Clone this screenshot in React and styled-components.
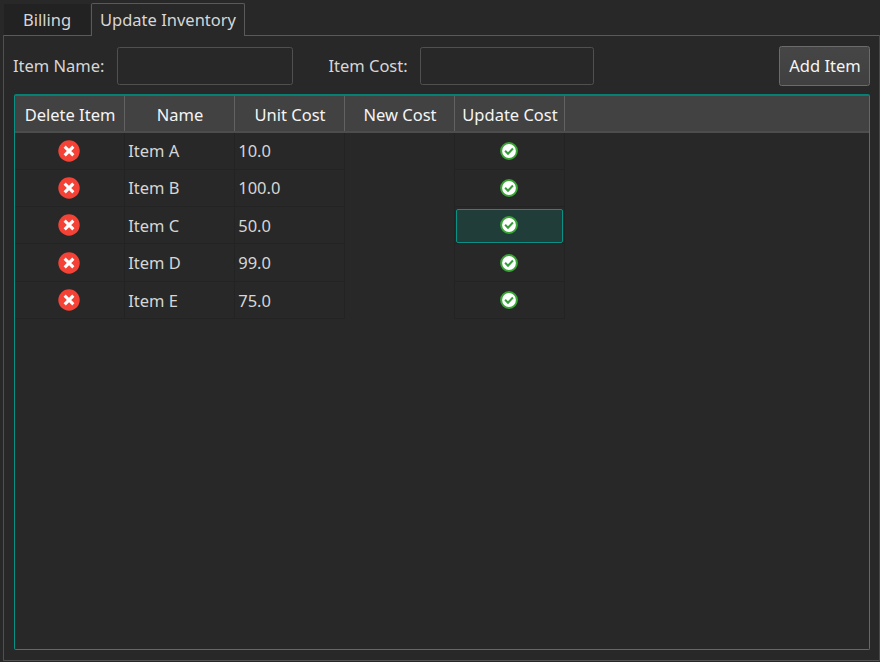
import React from "react";
import styled, { createGlobalStyle } from "styled-components";

const GlobalStyle = createGlobalStyle`
  * { box-sizing: border-box; }
  body {
    margin: 0;
    background: #282828;
    color: #d6d6d6;
    font: 16.5px/22px "Noto Sans", sans-serif;
    overflow: hidden;
  }
`;

const Window = styled.main`
  width: 880px;
  height: 662px;
  padding: 3px 0 1px 3px;
  display: flex;
  flex-direction: column;
`;

const TabBar = styled.div`
  display: flex;
  height: 33px;
  margin-bottom: -1px;
  z-index: 1;
`;

const Tab = styled.button`
  width: ${(p) => p.$width}px;
  height: 33px;
  padding: 0;
  font: inherit;
  color: inherit;
  border: 1px solid ${(p) => (p.$active ? "#5a5a5a" : "transparent")};
  border-bottom: 0;
  border-radius: 2px 2px 0 0;
  background: ${(p) => (p.$active ? "#282828" : "#222222")};
  background-clip: padding-box;
  box-shadow: ${(p) => (p.$active ? "none" : "inset 0 -1px #5a5a5a")};
`;

const Panel = styled.section`
  flex: 1;
  min-height: 0;
  width: 877px;
  border: 1px solid #505050;
  border-top-color: #5a5a5a;
  border-right-color: #484848;
  border-radius: 1px;
  padding: 10px 9px 10px 10px;
  display: flex;
  flex-direction: column;
`;

const Form = styled.form`
  display: flex;
  align-items: center;
  height: 40px;
  margin-left: -1px;
  margin-bottom: 8px;
`;

const Label = styled.label`
  width: ${(p) => p.$width}px;
`;

const Field = styled.input`
  width: ${(p) => p.$width}px;
  height: 38px;
  margin-right: ${(p) => p.$gap || 0}px;
  border: 1px solid #505050;
  border-radius: 2.5px;
  background: #282828;
  color: inherit;
  font: inherit;
  outline: 0;
`;

const AddButton = styled.button`
  width: 91px;
  height: 40px;
  margin-left: auto;
  padding: 0 0 0 1px;
  border: 1px solid #6b6b6b;
  border-radius: 2.5px;
  background: linear-gradient(#464646, #404040);
  color: #f5f5f5;
  font: inherit;
`;

const TableFrame = styled.div`
  flex: 1;
  border: 1px solid #089184;
  border-top: 2px solid #048074;
  border-radius: 2px;
`;

const Columns = styled.div`
  display: grid;
  grid-template-columns: repeat(5, 110px) 1fr;
`;

const Header = styled(Columns)`
  height: 37px;
  background: #424242;
  border-bottom: 2px solid #4d4d4d;
`;

const HeaderCell = styled.div`
  display: flex;
  align-items: center;
  justify-content: center;
  padding: 3px 0 0 1px;
  border-right: 1px solid #626262;
  color: #f5f5f5;
  white-space: nowrap;
`;

const Row = styled(Columns)`
  height: ${(p) => p.$height}px;
`;

const Cell = styled.div`
  display: flex;
  align-items: center;
  justify-content: ${(p) => (p.$center ? "center" : "flex-start")};
  padding: ${(p) => (p.$center ? "0 1px 0 0" : "0 0 0 3.2px")};
  border-right: 1px solid #232323;
  border-bottom: 1px solid ${(p) => (p.$blank ? "transparent" : "#232323")};
  position: relative;
`;

const CellText = styled.span`
  padding-top: ${(p) => (p.$raised ? 0 : 1)}px;
  margin-top: ${(p) => (p.$raised ? -1 : 0)}px;
`;

const Selection = styled.div`
  position: absolute;
  inset: 2px 1px 0 1px;
  border: 1px solid #089184;
  border-radius: 2px;
  background: #213d3a;
`;

const Icon = styled.svg`
  position: relative;
  display: block;
  margin-top: ${(p) => (p.$raised ? -1 : 0)}px;
`;

const DeleteIcon = ({ raised }) => (
  <Icon $raised={raised} width="22" height="22" viewBox="0 0 22 22">
    <circle cx="11" cy="11" r="10.7" fill="#f44336" />
    <path d="M7.8 7.8 14.2 14.2M14.2 7.8 7.8 14.2" stroke="#fff" strokeWidth="3.1" strokeLinecap="square" />
  </Icon>
);

const ApplyIcon = () => (
  <Icon width="18" height="18" viewBox="0 0 18 18">
    <circle cx="9" cy="9" r="7.9" fill="#fff" stroke="#38a534" strokeWidth="2" />
    <path d="m5.1 8.7 2.9 3 4.9-5.2" fill="none" stroke="#349c38" strokeWidth="2" />
  </Icon>
);

const headings = ["Delete Item", "Name", "Unit Cost", "New Cost", "Update Cost"];
const items = [
  { name: "Item A", cost: "10.0", height: 37, raised: true },
  { name: "Item B", cost: "100.0", height: 37, raised: true },
  { name: "Item C", cost: "50.0", height: 37, selected: true },
  { name: "Item D", cost: "99.0", height: 38 },
  { name: "Item E", cost: "75.0", height: 37 },
];

export default function App() {
  return (
    <Window>
      <GlobalStyle />
      <TabBar>
        <Tab $width={88}>Billing</Tab>
        <Tab $width={154} $active>Update Inventory</Tab>
      </TabBar>
      <Panel>
        <Form>
          <Label $width={104.4} htmlFor="name">Item Name:</Label>
          <Field id="name" $width={175.6} $gap={35.4} />
          <Label $width={91.6} htmlFor="cost">Item Cost:</Label>
          <Field id="cost" $width={174} />
          <AddButton type="button">Add Item</AddButton>
        </Form>
        <TableFrame>
          <Header>
            {headings.map((h) => <HeaderCell key={h}>{h}</HeaderCell>)}
          </Header>
          {items.map((item, index) => (
            <Row key={item.name} $height={item.height}>
              <Cell $center><DeleteIcon raised={index === 0} /></Cell>
              <Cell><CellText $raised={item.raised}>{item.name}</CellText></Cell>
              <Cell><CellText $raised={item.raised}>{item.cost}</CellText></Cell>
              <Cell $blank />
              <Cell $center>
                {item.selected && <Selection />}
                <ApplyIcon />
              </Cell>
            </Row>
          ))}
        </TableFrame>
      </Panel>
    </Window>
  );
}
